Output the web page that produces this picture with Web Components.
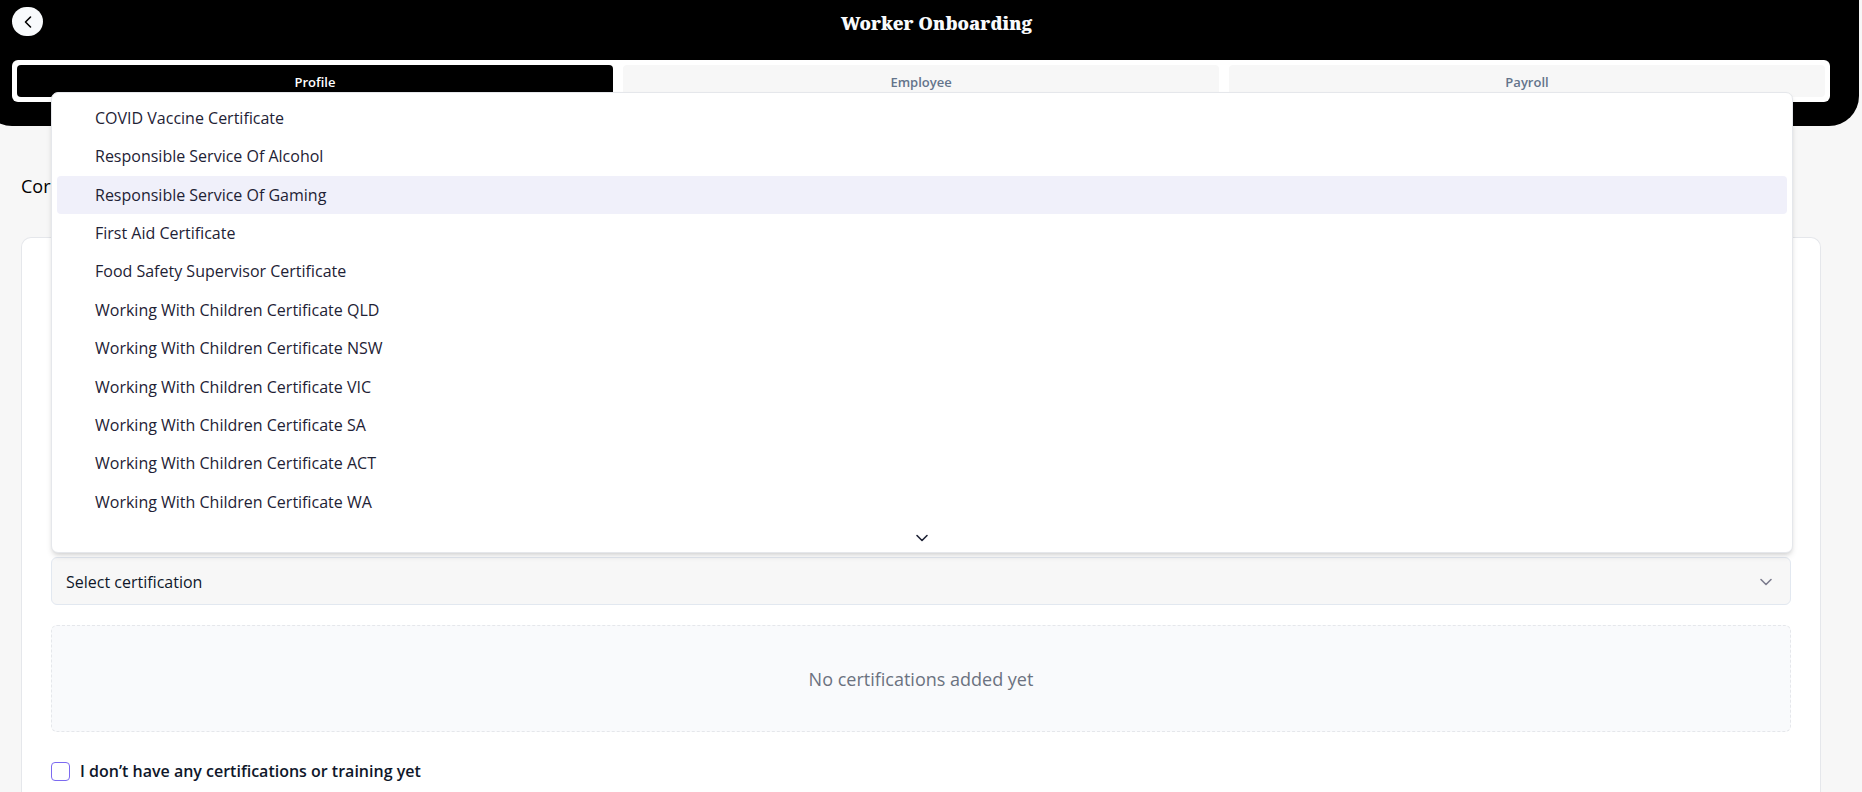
<!DOCTYPE html>
<html lang="en">
<head>
<meta charset="utf-8">
<title>Worker Onboarding</title>
<style>
html { background: #f7f7f7; }
body { margin: 0; font-family: "Segoe UI", "Open Sans", "Noto Sans", sans-serif; color: #0f172a; }
</style>
</head>
<body>
<onboarding-page></onboarding-page>
<script>
const define = (name, html) => {
  const template = document.createElement("template");
  template.innerHTML = html;
  customElements.define(name, class extends HTMLElement {
    constructor() {
      super();
      this.attachShadow({ mode: "open" }).append(template.content.cloneNode(true));
    }
  });
};

define("onboarding-header", `
<style>
:host { display: block; box-sizing: border-box; margin: 0 3px 0 -18px; padding: 7px 29px 24px 30px; background: #000; border-radius: 0 0 30px 30px; }
.bar { display: grid; grid-template-columns: 31px 1fr; align-items: start; margin-bottom: 23px; }
button { display: grid; place-items: center; width: 31px; height: 29px; padding: 0; border: 0; border-radius: 15px; background: #f8fafc; color: #000; }
h1 { margin: 0; padding-top: 2px; text-align: center; color: #f8fafc; font: 900 18px/28px "Droid Serif", "Noto Serif", "DejaVu Serif", serif; }
</style>
<div class="bar">
  <button type="button" aria-label="Back"><svg width="16" height="16" viewBox="0 0 16 16" fill="none" stroke="currentColor" stroke-width="1.6" stroke-linecap="round" stroke-linejoin="round"><path d="M10.5 3 5.5 8 10.5 13"/></svg></button>
  <h1>Worker Onboarding</h1>
</div>
<slot></slot>`);

define("step-tabs", `
<style>
:host { display: grid; grid-template-columns: repeat(3, 1fr); gap: 10px; padding: 5px; background: #fff; border-radius: 6px; }
</style>
<slot></slot>`);

define("step-tab", `
<style>
:host { display: block; }
button { display: block; width: 100%; height: 32px; padding: 2px 0 0; border: 0; border-radius: 4px; background: #f7f7f7; color: #64748b; font-family: inherit; font-size: 13px; font-weight: 600; line-height: 20px; text-align: center; }
:host([active]) button { background: #000; color: #fff; }
</style>
<button type="button"><slot></slot></button>`);

define("option-item", `
<style>
:host { display: block; padding: 7px 38px; border-radius: 4px; font-size: 16px; line-height: 24px; color: #1e2235; }
:host([active]) { background: #f0f0fa; }
</style>
<slot></slot>`);

define("option-list", `
<style>
:host { position: absolute; z-index: 2; left: 0; right: -2px; bottom: calc(100% + 4px); box-sizing: border-box; height: 461px; border: 1px solid #e5e7eb; border-radius: 7px; background: #fff; box-shadow: 0 4px 6px -1px #0000001f, 0 2px 4px -2px #0000001f; display: flex; flex-direction: column; justify-content: space-between; padding: 6px 5px 5px; }
.list { display: grid; grid-template-rows: repeat(11, 1fr); height: 422px; }
.more { display: flex; justify-content: center; }
svg { display: block; }
</style>
<div class="list" role="listbox"><slot></slot></div>
<div class="more"><svg width="18" height="18" viewBox="0 0 18 18" fill="none" stroke="#1e2235" stroke-width="1.6" stroke-linecap="round" stroke-linejoin="round"><path d="M4 6.5 9 11.5 14 6.5"/></svg></div>`);

define("certification-picker", `
<style>
:host { display: block; position: relative; }
button { display: flex; align-items: center; justify-content: space-between; width: 100%; height: 48px; padding: 1px 17px 0 14px; border: 1px solid #e2e8f0; border-radius: 6px; background: #f7f7f7; color: #0f172a; font-family: inherit; font-size: 16px; line-height: 24px; }
svg { display: block; }
</style>
<slot></slot>
<button type="button" aria-haspopup="listbox" aria-expanded="true"><span>Select certification</span><svg width="14" height="14" viewBox="0 0 14 14" fill="none" stroke="#7c7c8e" stroke-width="1.6" stroke-linecap="round" stroke-linejoin="round"><path d="M2 4.5 7 9.5 12 4.5"/></svg></button>`);

define("empty-note", `
<style>
:host { display: grid; place-items: center; box-sizing: border-box; height: 107px; margin: 20px 0 27px; border: 1px dashed #e5e7eb; border-radius: 6px; background: #f9fafc; color: #6b7280; font-size: 18px; line-height: 28px; }
</style>
<span><slot></slot></span>`);

define("check-field", `
<style>
:host { display: block; }
label { display: flex; align-items: center; gap: 10px; font-size: 16px; line-height: 24px; font-weight: 600; }
input { appearance: none; box-sizing: border-box; width: 19px; height: 19px; margin: 0; border: 1px solid #7c6af0; border-radius: 4px; background: #fff; }
</style>
<label><input type="checkbox"><span><slot></slot></span></label>`);

define("onboarding-page", `
<style>
:host { display: flex; flex-direction: column; min-height: 100vh; }
h2 { margin: 0; padding: 46px 21px 37px; font-size: 18px; line-height: 28px; font-weight: 400; color: #000; }
.card { flex: 1; margin: 0 41px 0 21px; padding: 319px 29px 0; border: 1px solid #e5e7eb; border-bottom: 0; border-radius: 10px 10px 0 0; background: #fff; }
</style>
<onboarding-header>
  <step-tabs><step-tab active>Profile</step-tab><step-tab>Employee</step-tab><step-tab>Payroll</step-tab></step-tabs>
</onboarding-header>
<h2>Cor</h2>
<div class="card">
  <certification-picker>
    <option-list>
      <option-item role="option">COVID Vaccine Certificate</option-item>
      <option-item role="option">Responsible Service Of Alcohol</option-item>
      <option-item role="option" active>Responsible Service Of Gaming</option-item>
      <option-item role="option">First Aid Certificate</option-item>
      <option-item role="option">Food Safety Supervisor Certificate</option-item>
      <option-item role="option">Working With Children Certificate QLD</option-item>
      <option-item role="option">Working With Children Certificate NSW</option-item>
      <option-item role="option">Working With Children Certificate VIC</option-item>
      <option-item role="option">Working With Children Certificate SA</option-item>
      <option-item role="option">Working With Children Certificate ACT</option-item>
      <option-item role="option">Working With Children Certificate WA</option-item>
    </option-list>
  </certification-picker>
  <empty-note>No certifications added yet</empty-note>
  <check-field>I don’t have any certifications or training yet</check-field>
</div>`);
</script>
</body>
</html>
